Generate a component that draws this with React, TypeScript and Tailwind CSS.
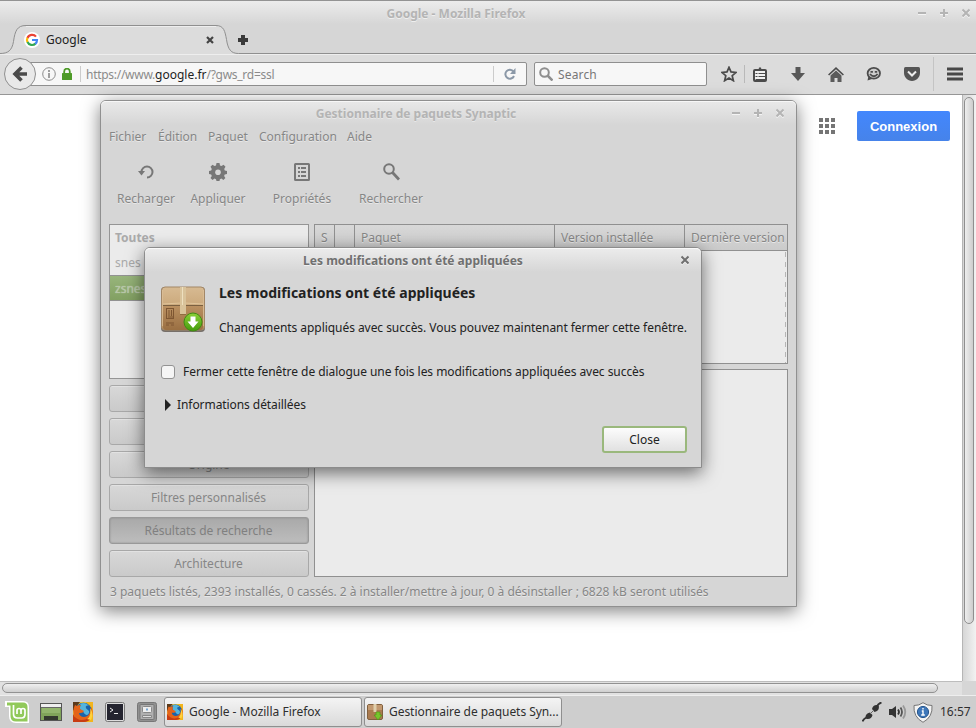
import React from "react";

function WindowButtons({ only, className }: { only?: boolean; className: string }) {
  return (
    <div className={"flex items-center gap-[14px] " + className}>
      {!only && (
        <>
          <svg width="8" height="10" viewBox="0 0 8 10"><path d="M0 6.5h8" stroke="#f4f4f4" /><path d="M0 5h8" stroke="currentColor" strokeWidth="2" /></svg>
          <svg width="8" height="10" viewBox="0 0 8 10"><path d="M0 6.5h8M3 9.5h2" stroke="#f4f4f4" /><path d="M0 5h8M4 1v8" stroke="currentColor" strokeWidth="2" /></svg>
        </>
      )}
      <svg width="8" height="10" viewBox="0 0 8 10"><path d="M.5 2.5l7 7M7.500 2.500l-7 7" stroke="#f4f4f4" strokeWidth="2" /><path d="M.5 1.500l7 7M7.500 1.500l-7 7" stroke="currentColor" strokeWidth="2" /></svg>
    </div>
  );
}

function FirefoxLogo({ size }: { size: number }) {
  return (
    <svg width={size} height={size} viewBox="0 0 20 20">
      <rect width="20" height="20" rx="1" fill="#e8c03a" />
      <path d="M0 0h7L4 4 0 9z" fill="#5c3a1c" />
      <path d="M13 0h7v20h-8c6-4 7-12 1-20z" fill="#f2b51d" />
      <circle cx="10.500" cy="9" r="8.300" fill="#1b63a8" />
      <path d="M7 2c3-2 7-1 9 2-2-1-4 0-3 2s4 2 3 5-4 2-5 0-4-2-4-5 1-2 0-4z" fill="#55b5dc" />
      <path d="M2 3c-3 6-2 13 4 16 5 2 11 0 13-5 1-3 1-6-1-9 0 6-3 10-7 10-3 0-5-2-5-4 2 0 4 0 5-2l-4-2c0-2 0-3 1-4-2 0-3 0-4 1z" fill="#e4641a" />
      <path d="M0 12c2 4 5 6 9 6 5 0 8-3 9-7 2 5-2 9-7 9H0z" fill="#c83c12" />
      <path d="M14 17c3-2 4-6 3-11 3 4 3 8 1 12z" fill="#ffd23a" />
    </svg>
  );
}

function PackageIcon() {
  return (
    <svg width="46" height="46" viewBox="0 0 46 46">
      <defs>
        <linearGradient id="lid" x1="0" x2="0" y1="0" y2="1"><stop stopColor="#d7ba92" /><stop offset="1" stopColor="#bc935f" /></linearGradient>
        <linearGradient id="front" x1="0" x2="0" y1="0" y2="1"><stop stopColor="#ba9061" /><stop offset="1" stopColor="#9a6f42" /></linearGradient>
        <linearGradient id="ball" x1="0" x2="0" y1="0" y2="1"><stop stopColor="#8bd037" /><stop offset="1" stopColor="#439c0b" /></linearGradient>
      </defs>
      <rect x="1" y="1" width="44" height="45" rx="4" fill="#77706a" />
      <rect x="1.500" y="1" width="43" height="43" rx="3.500" fill="url(#lid)" stroke="#a28767" />
      <path d="M3 20h40v21q0 3-3 3H6q-3 0-3-3z" fill="url(#front)" />
      <path d="M3 19.500h40" stroke="#7b6041" />
      <path d="M3 18l18-1M25 17l18 1" stroke="#e0c49a" />
      <path d="M2.500 4v36M43.500 4v36" stroke="#ddc19b" opacity=".7" />
      <path d="M20 1h6v27h-6z" fill="#d9c39b" />
      <path d="M22.500 1v18" stroke="#eee0bf" />
      <path d="M20 28.500h6" stroke="#8f6d42" />
      <g stroke="#7e5632" fill="none"><rect x="6.500" y="22.500" width="7" height="10" /><path d="M9 24v6M11.500 24v6M8 31h5M6 37h8M6 39h3m2 0h3" /></g>
      <circle cx="33" cy="36" r="9" fill="url(#ball)" stroke="#3f8c12" />
      <path d="M30.500 30.500h5v5h3L33 42l-5.500-6.500h3z" fill="#fff" />
    </svg>
  );
}

function FirefoxWindow() {
  return (
    <section className="flex h-[695px] flex-col bg-[#d6d6d6]">
      <header className="flex h-6 border-t border-[#939393] bg-gradient-to-b from-[#ececec] to-[#d6d6d6] text-[#b4b4b4]">
        <h1 className="ml-[58px] flex-1 pt-[4px] pr-[64px] text-center text-[12px] leading-[18px] font-bold [text-shadow:0_1px_0_#efefef]">Google - Mozilla Firefox</h1>
        <WindowButtons className="mr-[6px]" />
      </header>
      <nav className="relative h-[30px]">
        <svg className="absolute inset-0" width="976" height="30" viewBox="0 0 976 30">
          <path d="M0 30V29.500c8 0 12-3 13.500-12C15 7 17 1.500 26 1.500h190c8 0 9 6 10.500 14 1.500 10 4.500 14 12 14H976v.5z" fill="#dcdcdc" />
          <path d="M0 29.500c8 0 12-3 13.500-12C15 7 17 1.500 26 1.500h190c8 0 9 6 10.500 14 1.500 10 4.500 14 12 14H976" fill="none" stroke="#8f8f8f" />
          <path d="M26 2.500h190" stroke="#eee" />
        </svg>
        <div className="relative flex h-[30px] items-center pt-[2px] text-[12px] text-[#222]">
          <svg className="ml-6" width="16" height="16" viewBox="0 0 16 16">
            <circle cx="8" cy="8" r="8" fill="#fff" />
            <g fill="none" strokeWidth="2.200"><path d="M12 4.600A5 5 0 0 0 3.500 6" stroke="#ea4335" /><path d="M3.500 5.800a5 5 0 0 0 0 4.500" stroke="#fbbc05" /><path d="M3.500 10A5 5 0 0 0 11.500 11.600" stroke="#34a853" /><path d="M8 8h5a5 5 0 0 1-1.800 3.900" stroke="#4285f4" /></g>
          </svg>
          <span className="ml-[6px] w-[160px]">Google</span>
          <svg width="8" height="8" viewBox="0 0 8 8"><path d="M1 1l6 6M7 1L1 7" stroke="#444" strokeWidth="2.200" /></svg>
          <svg className="ml-6" width="10" height="10" viewBox="0 0 10 10"><path d="M0 5h10M5 0v10" stroke="#3a3a3a" strokeWidth="4" /></svg>
        </div>
      </nav>
      <div className="flex h-[41px] items-center border-b border-[#969696] bg-[#dcdcdc] pl-1 text-[12px] text-[#555] shadow-[inset_0_1px_0_#eee]">
        <svg className="z-10 -mr-4" width="32" height="32" viewBox="0 0 32 32">
          <circle cx="16" cy="16" r="15.500" fill="#e9e9e9" stroke="#8f8f8f" />
          <path d="M17.500 9.500L11 16l6.500 6.500M11 16h12" fill="none" stroke="#4b4b4b" strokeWidth="3.600" />
        </svg>
        <div className="flex h-6 w-[507px] items-center rounded-[2px] border border-[#8f8f8f] bg-[#f7f7f7] pl-[21px]">
          <svg width="14" height="14" viewBox="0 0 14 14"><circle cx="7" cy="7" r="6.300" fill="none" stroke="#8c8c8c" /><path d="M7 6v5M7 3v2" stroke="#888" strokeWidth="1.600" /></svg>
          <svg className="ml-[6px]" width="10" height="12" viewBox="0 0 10 12"><path d="M2.200 6V3.500a2.800 2.800 0 0 1 5.600 0V6" fill="none" stroke="#4d9a27" strokeWidth="1.800" /><rect y="5" width="10" height="7" rx=".5" fill="#4d9a27" /></svg>
          <i className="ml-2 h-4 w-px bg-[#ccc]" />
          <span className="ml-[5px] flex-1 pt-[2px] tracking-[-0.28px] text-[#8b8b8b]">https://www.<span className="tracking-normal text-[#222]">google.fr</span>/?gws_rd=ssl</span>
          <i className="mr-[10px] h-4 w-px bg-[#ccc]" />
          <svg className="mr-[10px]" width="12" height="12" viewBox="0 0 12 12"><path d="M9.500 3.500A4.500 4.500 0 1 0 10 8" fill="none" stroke="#8b98a7" strokeWidth="2" /><path d="M11.500 0v6H6z" fill="#8b98a7" /></svg>
        </div>
        <div className="ml-[7px] flex h-6 w-[173px] items-center rounded-[2px] border border-[#8f8f8f] bg-[#f7f7f7] pl-1 text-[#777]">
          <svg width="14" height="14" viewBox="0 0 14 14"><circle cx="5.500" cy="5.500" r="4.300" fill="none" stroke="#8f8f8f" strokeWidth="2" /><path d="M8.500 8.500l5 5" stroke="#8f8f8f" strokeWidth="2.500" /></svg>
          <span className="ml-[5px] pt-[2px] tracking-[0.15px]">Search</span>
        </div>
        <svg className="ml-[14px]" width="16" height="16" viewBox="0 0 16 16"><path d="M8 1.300l2 4.600 5 .5-3.800 3.300 1.200 5L8 12.100l-4.400 2.600 1.200-5L1 6.400l5-.5z" fill="none" stroke="#4b4b4b" strokeWidth="1.700" /></svg>
        <i className="ml-[7px] h-[18px] w-px bg-[#b9b9b9]" />
        <svg className="ml-2" width="14" height="15" viewBox="0 0 14 15"><path d="M3 3h2.500L6 .5h2L8.500 3H11v1H3z" fill="#4b4b4b" /><rect x="1" y="3" width="12" height="11" rx="1" fill="#f0f0f0" stroke="#4b4b4b" strokeWidth="2" /><path d="M2.500 6.500h2M5.500 6.500H12M2.500 9.500h2M5.500 9.500H12M2.500 12.500H12" stroke="#4b4b4b" /></svg>
        <svg className="ml-6" width="14" height="14" viewBox="0 0 14 14"><path d="M4.500 0h5v6H14l-7 8-7-8h4.500z" fill="#585858" /></svg>
        <svg className="ml-[23px]" width="16" height="15" viewBox="0 0 16 15"><path d="M.6 8L8 1.200 15.400 8" fill="none" stroke="#4b4b4b" strokeWidth="1.600" /><path d="M2.500 8.500L8 3.500l5.500 5V15h-4v-4h-3v4h-4z" fill="#5b5b5b" /></svg>
        <svg className="ml-[22px]" width="15" height="14" viewBox="0 0 15 14"><path d="M2.500 9L1.500 13.500 6 12z" fill="#4b4b4b" /><ellipse cx="7.800" cy="6.300" rx="6.200" ry="5.400" fill="#ccc" stroke="#4b4b4b" strokeWidth="1.800" /><path d="M4 7q3.800 4.500 7.600 0M4.500 4.800h2.400M8.800 4.800h2.400" fill="none" stroke="#4b4b4b" strokeWidth="1.800" /></svg>
        <svg className="ml-[23px]" width="16" height="14" viewBox="0 0 16 14"><path d="M1.500 0h13Q16 0 16 1.500V6c0 4-3.500 8-8 8S0 10 0 6V1.500Q0 0 1.500 0z" fill="#555" /><path d="M4 4.500l4 4 4-4" fill="none" stroke="#eee" strokeWidth="2" /></svg>
        <i className="ml-[13px] h-[34px] w-px bg-[#c4c4c4]" />
        <svg className="ml-[13px]" width="16" height="14" viewBox="0 0 16 14"><path d="M0 2h16M0 7h16M0 12h16" stroke="#484848" strokeWidth="3" /></svg>
      </div>
      <div className="flex flex-1">
        <div className="flex flex-1 flex-col">
          <main className="flex flex-1 justify-end bg-white pt-4 pr-3">
            <div className="mt-[7px] mr-[22px] grid h-4 w-4 grid-cols-3 gap-[2px]">
              {Array.from({ length: 9 }, (_, i) => <i key={i} className="h-1 w-1 bg-[#757575]" />)}
            </div>
            <button className="h-[30px] w-[93px] rounded-[2px] bg-gradient-to-b from-[#4387fd] to-[#4683ea] pt-px font-[Liberation_Sans] text-[13px] font-bold text-white">Connexion</button>
          </main>
          <div className="flex h-[14px] items-center border-t border-[#bdbdbd] bg-[#e1e1e1] pl-[2px]">
            <i className="-mt-px h-[10px] w-[936px] rounded-full border border-[#929292] bg-gradient-to-b from-[#f0f0f0] to-[#cfcfcf]" />
          </div>
        </div>
        <div className="flex w-[14px] flex-col bg-[#d6d6d6]">
          <div className="h-[586px] border-l border-[#b5b5b5] bg-gradient-to-r from-[#d6d6d6] to-[#f2f2f2] pt-[2px] pl-px">
            <i className="block h-[527px] w-[10px] rounded-full border border-[#8f8f8f] bg-gradient-to-r from-[#eee] to-[#cdcdcd]" />
          </div>
        </div>
      </div>
    </section>
  );
}

function ToolButton({ label, className, children }: { label: string; className: string; children: React.ReactNode }) {
  return (
    <div className={"flex flex-col items-center gap-[10px] " + className}>
      <svg width="18" height="18" viewBox="0 0 18 18">{children}</svg>
      <span className="leading-4 whitespace-nowrap">{label}</span>
    </div>
  );
}

function SynapticWindow() {
  // The first two category buttons sit behind the dialog and carry no label.
  const categories = ["", "", "Origine", "Filtres personnalisés", "Résultats de recherche", "Architecture"];
  return (
    <section className="absolute top-[100px] left-[100px] flex h-[507px] w-[697px] flex-col rounded-t-[6px] border border-[#909090] bg-[#d6d6d6] text-[12px] text-[#868686] shadow-[0_4px_18px_rgba(0,0,0,0.5)] [text-shadow:0_1px_0_#e8e8e8]">
      <header className="flex h-6 rounded-t-[5px] bg-gradient-to-b from-[#e9e9e9] to-[#d6d6d6] text-[#b4b4b4] shadow-[inset_0_1px_0_#f7f7f7]">
        <h1 className="flex-1 pt-[4px] pr-px text-center text-[12px] leading-[18px] font-bold">Gestionnaire de paquets Synaptic</h1>
        <WindowButtons className="mr-3" />
      </header>
      <nav className="flex h-[23px] gap-3 pl-2 leading-[24px]">
        <span className="w-[37px] whitespace-nowrap">Fichier</span><span className="w-[38px] whitespace-nowrap">Édition</span><span className="w-[39px] whitespace-nowrap">Paquet</span><span className="w-[76px] whitespace-nowrap">Configuration</span><span>Aide</span>
      </nav>
      <div className="flex h-[76px] pt-[15px]">
        <ToolButton label="Recharger" className="ml-[15px] w-[60px]"><path d="M4.500 9a5.500 5.500 0 1 1 5.500 5.500" fill="none" stroke="#777" strokeWidth="2" /><path d="M1 8h7L4.500 12.500z" fill="#777" /></ToolButton>
        <ToolButton label="Appliquer" className="ml-[14px] w-[56px]"><path d="M7.500 0h3l.5 2.500 1.500.6 2-1.400 2 2-1.300 2.200.6 1.500L18 8v3l-2.300.5-.6 1.400 1.300 2-2 2-2-1.300-1.500.6L10.500 18h-3L7 16.200l-1.500-.6-2 1.300-2-2 1.300-2-.6-1.400L0 11V8l2.200-.6.6-1.500L1.500 3.700l2-2 2 1.400L7 2.500z" fill="#777" /><circle cx="9" cy="9.200" r="2.800" fill="#d6d6d6" /></ToolButton>
        <ToolButton label="Propriétés" className="ml-[26px] w-[60px]"><rect x="2" y="1" width="14" height="16" rx=".5" fill="none" stroke="#777" strokeWidth="2" /><path d="M5 5h2M8 5h5M5 9h2M8 9h5M5 13h2M8 13h5" stroke="#777" strokeWidth="2" /></ToolButton>
        <ToolButton label="Rechercher" className="ml-[26px] w-[66px]"><circle cx="7" cy="6" r="4.800" fill="none" stroke="#777" strokeWidth="2" /><path d="M10.500 9.500l6.500 7" stroke="#777" strokeWidth="2.800" /></ToolButton>
      </div>
      <div className="flex h-[353px] gap-[5px] pl-2">
        <aside className="flex w-[200px] flex-col gap-[6px]">
          <ul className="h-[155px] shrink-0 border border-[#959595] bg-[#ebebeb] leading-[26px] text-[#aaa]">
            <li className="h-[25px] pl-[5px] font-bold">Toutes</li>
            <li className="h-[25px] pl-[5px]">snes</li>
            <li className="h-[26px] border-y border-[#929292] bg-gradient-to-b from-[#98b57c] to-[#82a062] pl-[5px] leading-[25px] text-[#b8c7a9] [text-shadow:0_0_1px_#c5d0b8]">zsnes</li>
          </ul>
          {categories.map((name, i) => (
            <button
              key={i}
              className={
                "h-[27px] shrink-0 rounded-[3px] border pr-px text-center " +
                (name === "Résultats de recherche"
                  ? "border-[#999] bg-gradient-to-b from-[#a9a9a9] to-[#bdbdbd] text-[#808080] shadow-[inset_0_0_2px_#888] [text-shadow:none]"
                  : "border-[#a8a8a8] bg-gradient-to-b from-[#d8d8d8] to-[#cacaca] shadow-[inset_0_1px_0_#e2e2e2]")
              }
            >
              {name}
            </button>
          ))}
        </aside>
        <div className="flex w-[474px] flex-col gap-[5px]">
          <div className="h-[140px] border border-[#909090] bg-[#ebebeb] pr-px">
            <div className="-mr-px flex h-[26px] border-b border-[#909090] bg-gradient-to-b from-[#d8d8d8] to-[#cbcbcb] leading-[25px] whitespace-nowrap">
              <span className="w-5 border-r border-[#909090] pl-[6px]">S</span>
              <span className="w-5 border-r border-[#909090]" />
              <span className="w-[200px] border-r border-[#909090] pl-[6px]">Paquet</span>
              <span className="w-[130px] border-r border-[#909090] pl-[6px]">Version installée</span>
              <span className="pl-[6px]">Dernière version</span>
            </div>
            <div className="ml-auto h-[112px] w-px bg-[repeating-linear-gradient(to_bottom,#ebebeb_0_1px,#b5b5b5_1px_6px,#ebebeb_6px_10px)]" />
          </div>
          <div className="flex-1 border border-[#909090] bg-[#ebebeb]" />
        </div>
      </div>
      <footer className="pt-px pl-[9px] leading-[28px] whitespace-nowrap">3 paquets listés, 2393 installés, 0 cassés. 2 à installer/mettre à jour, 0 à désinstaller ; 6828 kB seront utilisés</footer>
    </section>
  );
}

function ChangesDialog() {
  return (
    <section className="absolute top-[247px] left-[144px] flex h-[221px] w-[558px] flex-col rounded-t-[6px] border border-[#8c8c8c] bg-[#d6d6d6] text-[12px] whitespace-nowrap text-[#222] shadow-[0_5px_18px_rgba(0,0,0,0.55)]">
      <header className="flex h-6 shrink-0 rounded-t-[5px] bg-gradient-to-b from-[#ececec] to-[#d6d6d6] text-[#707070] shadow-[inset_0_1px_0_#f9f9f9]">
        <h2 className="flex-1 pt-[4px] text-center text-[12px] leading-[18px] font-bold [text-shadow:0_1px_0_#f0f0f0]">Les modifications ont été appliquées</h2>
        <WindowButtons only className="mr-3" />
      </header>
      <div className="flex gap-[13px] pt-[14px] pl-[15px]">
        <PackageIcon />
        <div className="-mt-[2px]">
          <h3 className="text-[14px] leading-[18px] font-bold">Les modifications ont été appliquées</h3>
          <p className="mt-[18px] leading-4 tracking-[-0.05px]">Changements appliqués avec succès. Vous pouvez maintenant fermer cette fenêtre.</p>
        </div>
      </div>
      <label className="mt-[28px] flex h-4 items-center pl-4 tracking-[-0.05px]">
        <span className="mr-2 h-[14px] w-[14px] rounded-[3px] border border-[#939393] bg-[#f5f5f5]" />
        Fermer cette fenêtre de dialogue une fois les modifications appliquées avec succès
      </label>
      <div className="mt-[17px] flex h-4 items-center pl-5 tracking-[-0.07px]">
        <svg className="mr-[6px] mb-px" width="6" height="12" viewBox="0 0 6 12"><path d="M0 0l6 6-6 6z" fill="#222" /></svg>
        Informations détaillées
      </div>
      <button className="mt-[13px] mr-[14px] h-[27px] w-[85px] shrink-0 self-end rounded-[3px] border-2 border-[#9ab87c] bg-gradient-to-b from-[#fcfcfc] to-[#e1e1e1] text-center">Close</button>
    </section>
  );
}

function Taskbar() {
  return (
    <footer className="flex h-[33px] items-center border-t border-[#eee] bg-[#cecece] pl-[5px] text-[12px] text-[#2e2e2e]">
      <svg width="24" height="22" viewBox="0 0 24 22">
        <path d="M0 0h18q6 0 6 6v16H11q-7 0-7-7V6H0z" fill="#fff" />
        <path d="M2 1.500h16q4.500 0 4.500 4.500v14.500H11q-5.500 0-5.500-5.500V4.500H2z" fill="#91c95a" />
        <path d="M8.500 4v9q0 4 4 4h4q3.500 0 3.500-4V9.500q0-2-2-2t-2 2V13m0-3.500q0-2-2-2t-2 2V13" fill="none" stroke="#fff" strokeWidth="1.700" />
      </svg>
      <svg className="ml-[11px]" width="22" height="20" viewBox="0 0 22 20"><rect x=".5" y="1.500" width="21" height="17" fill="#80a45a" stroke="#555" /><path d="M1 2h20v3H1z" fill="#eee" /><path d="M1 5.500h20" stroke="#666" /><path d="M4 14h14v4H4z" fill="#33392e" /><path d="M2 6h18v5H2z" fill="#92b56c" /></svg>
      <span className="ml-[11px]"><FirefoxLogo size={20} /></span>
      <svg className="ml-3" width="20" height="20" viewBox="0 0 20 20"><rect x=".5" y=".5" width="19" height="19" rx="2" fill="#ddd" stroke="#777" /><rect x="2" y="2" width="16" height="16" fill="#252530" /><path d="M5 6l3 2-3 2M9 11.500h4" fill="none" stroke="#eee" /></svg>
      <svg className="ml-3" width="20" height="20" viewBox="0 0 20 20"><rect x=".5" y=".5" width="19" height="19" rx="2" fill="#909090" stroke="#777" /><rect x="3" y="2.500" width="14" height="15" rx="1" fill="#b0b0b0" stroke="#777" /><rect x="5.500" y="4.500" width="9" height="6" rx="1" fill="#eee" stroke="#888" /><path d="M9 6.500h2v2H9z" fill="#79a6d2" /><path d="M5.500 13.500h9v2h-9z" fill="#ddd" stroke="#888" /></svg>
      <div className="ml-[7px] flex h-[30px] w-[198px] items-center rounded-[3px] border border-[#8f8f8f] bg-gradient-to-b from-[#f4f4f4] to-[#dadada] pl-[2px]"><FirefoxLogo size={16} /><span className="ml-[6px]">Google - Mozilla Firefox</span></div>
      <div className="ml-[2px] flex h-[30px] w-[198px] items-center rounded-[3px] border border-[#8f8f8f] bg-gradient-to-b from-[#f4f4f4] to-[#dadada] pl-[2px] whitespace-nowrap">
        <svg width="16" height="16" viewBox="0 0 16 16"><rect x=".5" y=".5" width="15" height="15" rx="1.500" fill="#aa7b50" stroke="#81603e" /><path d="M1 1h14v5H1z" fill="#c29970" /><path d="M6.500 0h3v8h-3z" fill="#e0cfac" /><path d="M9 8h4v3h2l-4 5-4-5h2z" fill="#76c52c" stroke="#4c9313" strokeWidth=".6" /></svg>
        <span className="ml-[6px] tracking-[-0.05px]">Gestionnaire de paquets Syn...</span>
      </div>
      <svg className="ml-auto" width="20" height="20" viewBox="0 0 20 20"><path d="M.5 19.500q1-3 5-4.500M19.500.5q-3 .5-5 4.500" fill="none" stroke="#333" strokeWidth="1.800" /><path d="M3.500 16q-.5-4.500 4.500-5.500l2.500 2.500q-1 4.500-5.500 4zM10 7q1-4.500 5.500-4l1.500 1.500q0 4.500-4.500 5.500z" fill="#333" /><path d="M8 12l4-4" stroke="#666" strokeWidth="1" /></svg>
      <svg className="ml-[7px]" width="18" height="16" viewBox="0 0 18 16"><path d="M0 5h3l4-3v12l-4-3H0z" fill="#333" /><path d="M9 5.500q2 2.500 0 5" stroke="#333" strokeWidth="1.800" fill="none" /><path d="M11.500 3.500q3 4.500 0 9" stroke="#555" strokeWidth="1.800" fill="none" /><path d="M14 1.500q4.500 6.500 0 13" stroke="#999" strokeWidth="1.800" fill="none" /></svg>
      <svg className="ml-[6px]" width="20" height="21" viewBox="0 0 20 21"><path d="M10 .7q4 3 9 2.800Q20 15 10 20.300 0 15 1 3.500 6 3.700 10 .7z" fill="#f3f3f3" stroke="#777" /><circle cx="10" cy="10" r="5.600" fill="#3f78ba" stroke="#28578e" /><path d="M10 6v1.500M8.800 9H10v4m-1.800 0h3.600" stroke="#fff" strokeWidth="1.400" fill="none" /></svg>
      <time className="mr-[5px] ml-[7px] w-[31px] whitespace-nowrap">16:57</time>
    </footer>
  );
}

export default function App() {
  return (
    <div className="relative h-[728px] w-[976px] overflow-hidden font-['Noto_Sans',sans-serif] leading-4">
      <FirefoxWindow />
      <Taskbar />
      <SynapticWindow />
      <ChangesDialog />
    </div>
  );
}
